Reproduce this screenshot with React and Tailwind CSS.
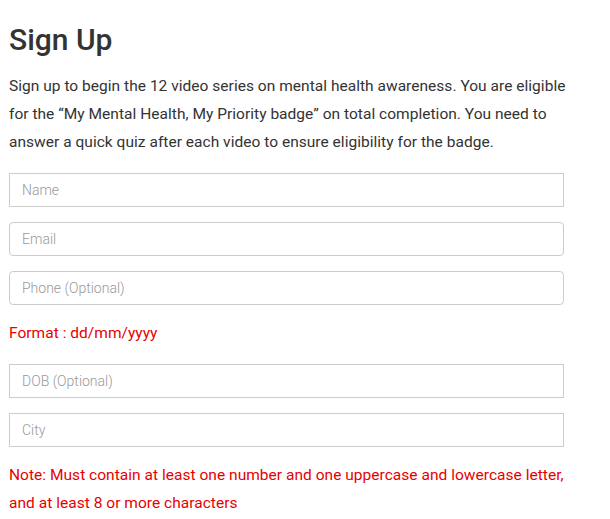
import React from "react";

const inputBase =
  "w-full h-[34px] border border-[#cccccc] bg-white px-3 text-[14px] text-[#333] placeholder:text-[#999] font-light outline-none";

export default function App() {
  return (
    <div className="min-h-screen bg-white pl-[9px] pr-[30px] pt-[20px] font-['Roboto',sans-serif] text-[#333]">
      <h1 className="text-[30px] font-medium leading-[40px] text-[#333]">Sign Up</h1>
      <p className="mt-[12px] text-[15.5px] tracking-[0.03px] leading-[28px] text-[#333]">
        Sign up to begin the 12 video series on mental health awareness. You are eligible for the “My Mental Health,
        My Priority badge” on total completion. You need to answer a quick quiz after each video to ensure eligibility
        for the badge.
      </p>
      <form className="mt-[17px] flex w-[555px] flex-col">
        <input className={inputBase} placeholder="Name" />
        <input className={`${inputBase} mt-[15px] rounded-[4px]`} placeholder="Email" />
        <input className={`${inputBase} mt-[15px] rounded-[4px]`} placeholder="Phone (Optional)" />
        <p className="mt-[14px] text-[15.5px] tracking-[0.03px] leading-[28px] text-[#e80000]">Format : dd/mm/yyyy</p>
        <input className={`${inputBase} mt-[17px]`} placeholder="DOB (Optional)" />
        <input className={`${inputBase} mt-[15px]`} placeholder="City" />
        <p className="mt-[14px] text-[15.5px] tracking-[0.03px] leading-[28px] text-[#e80000]">
          Note: Must contain at least one number and one uppercase and lowercase letter, and at least 8 or more
          characters
        </p>
      </form>
    </div>
  );
}
